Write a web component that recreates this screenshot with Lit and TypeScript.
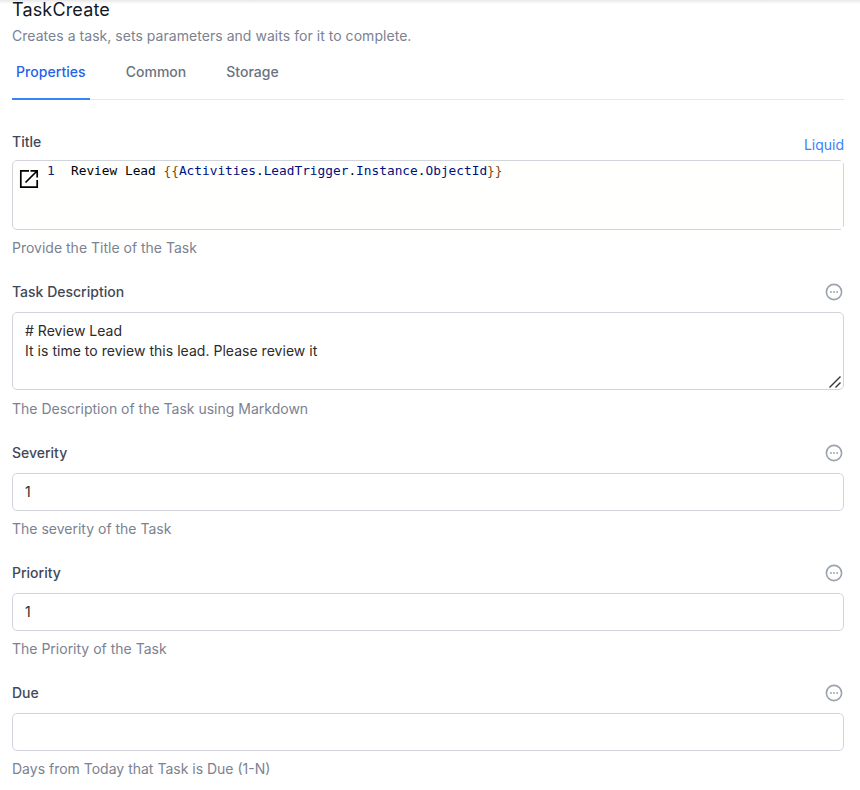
import { LitElement, html, css, nothing } from "lit";
import { customElement, property } from "lit/decorators.js";

@customElement("form-field")
class FormField extends LitElement {
  @property() label = "";
  @property() hint = "";
  @property() syntax = "";

  static styles = css`
    :host { display: block; }
    .head { display: flex; justify-content: space-between; height: 20px; align-items: center; }
    .label { font-weight: 450; color: #3f4958; }
    .syntax { color: #3b82f6; padding-top: 6px; }
    .body { margin-top: var(--body-gap, 10px); }
    .hint { margin-top: var(--hint-gap, 8px); line-height: 20px; color: #7b8291; }
    .more { display: block; width: 20px; height: 20px; }
  `;

  render() {
    return html`
      <div class="head">
        <span class="label">${this.label}</span>
        ${this.syntax
          ? html`<span class="syntax">${this.syntax}</span>`
          : html`<svg class="more" viewBox="0 0 20 20" fill="none">
              <circle cx="10" cy="10" r="7.6" stroke="#9ca3af" stroke-width="1.6" />
              <g fill="#9ca3af">
                <circle cx="6.9" cy="10" r="0.95" /><circle cx="10" cy="10" r="0.95" /><circle cx="13.1" cy="10" r="0.95" />
              </g>
            </svg>`}
      </div>
      <div class="body"><slot></slot></div>
      ${this.hint ? html`<div class="hint">${this.hint}</div>` : nothing}
    `;
  }
}

@customElement("app-root")
class AppRoot extends LitElement {
  static styles = css`
    :host {
      display: block; box-sizing: border-box; height: 790px; overflow: hidden;
      background: #fff; padding: 0 16px 0 12px;
      font: 400 14px/20px Inter, sans-serif; color: #2b2b2b;
    }
    .shade { height: 4px; margin: 0 -16px 0 -12px; background: linear-gradient(#e8e8e8, #fff); }
    .title { font-size: 18px; line-height: 24px; margin-top: -6px; color: #111827; letter-spacing: 0.15px; }
    .sub { color: #7b8291; margin-top: 4px; letter-spacing: 0.04px; }
    .tabs { display: flex; gap: 32px; border-bottom: 1px solid #e5e7eb; height: 53px; }
    .tab { padding: 16px 4px 0; font-weight: 450; color: #6b7280; letter-spacing: 0.01px; }
    .tab.on { color: #2563eb; border-bottom: 2px solid #3b82f6; margin-bottom: -1px; letter-spacing: 0.05px; }
    form-field { margin-top: 24px; }
    form-field.first { margin-top: 32px; --body-gap: 8px; }
    form-field.tall { --hint-gap: 9px; }
    .box { box-sizing: border-box; border: 1px solid #d1d5db; border-radius: 5px; height: 38px; padding: 8px 12px; }
    .area { height: 78px; position: relative; letter-spacing: 0.03px; }
    .grip { position: absolute; right: 1px; bottom: 0; }
    .code { position: relative; height: 70px; padding: 0; display: flex; background: #fffffe; font: 12.8px/19px "DejaVu Sans Mono", monospace; letter-spacing: 0; }
    /* The editor surface covers the frame's rounded corners on its right side. */
    .code::before, .code::after { content: ""; position: absolute; right: -1px; width: 3px; height: 3px; background: #fffffe; }
    .code::before { top: -1px; }
    .code::after { bottom: -1px; }
    .open { margin: 6px 0 0 4px; width: 24px; height: 24px; flex: none; }
    .num { color: #0b216f; margin-left: 6px; width: 24px; }
    .src { white-space: pre; color: #000; }
    .brace { color: #7a4a0c; }
    .name { color: #001080; }
  `;

  render() {
    const path = ["Activities", "LeadTrigger", "Instance", "ObjectId"];
    return html`
      <div class="shade"></div>
      <div class="title">TaskCreate</div>
      <div class="sub">Creates a task, sets parameters and waits for it to complete.</div>
      <div class="tabs">
        <div class="tab on">Properties</div>
        <div class="tab">Common</div>
        <div class="tab">Storage</div>
      </div>
      <form-field class="first" label="Title" syntax="Liquid" hint="Provide the Title of the Task">
        <div class="box code">
          <svg class="open" viewBox="0 0 24 24" fill="none" stroke="#000" stroke-width="1.7"><path d="M12 3.8H3.8V20.2H20.2V13M13.5 3.8H20.2V10.5M20 4L8.5 15.5" /></svg>
          <span class="num">1</span><span class="src">Review Lead <span class="brace">{{</span>${path.map(
            (p, i) => html`${i ? "." : ""}<span class="name">${p}</span>`
          )}<span class="brace">}}</span></span>
        </div>
      </form-field>
      <form-field class="tall" label="Task Description" hint="The Description of the Task using Markdown">
        <div class="box area"># Review Lead<br />It is time to review this lead. Please review it<svg class="grip" width="14" height="14" viewBox="0 0 14 14" stroke="#333" stroke-width="1.4"><path d="M1.5 12.5L12.5 1.5M7.5 12.5L12.5 7.5" /></svg></div>
      </form-field>
      <form-field label="Severity" hint="The severity of the Task"><div class="box">1</div></form-field>
      <form-field label="Priority" hint="The Priority of the Task"><div class="box">1</div></form-field>
      <form-field label="Due" hint="Days from Today that Task is Due (1-N)"><div class="box"></div></form-field>
    `;
  }
}
